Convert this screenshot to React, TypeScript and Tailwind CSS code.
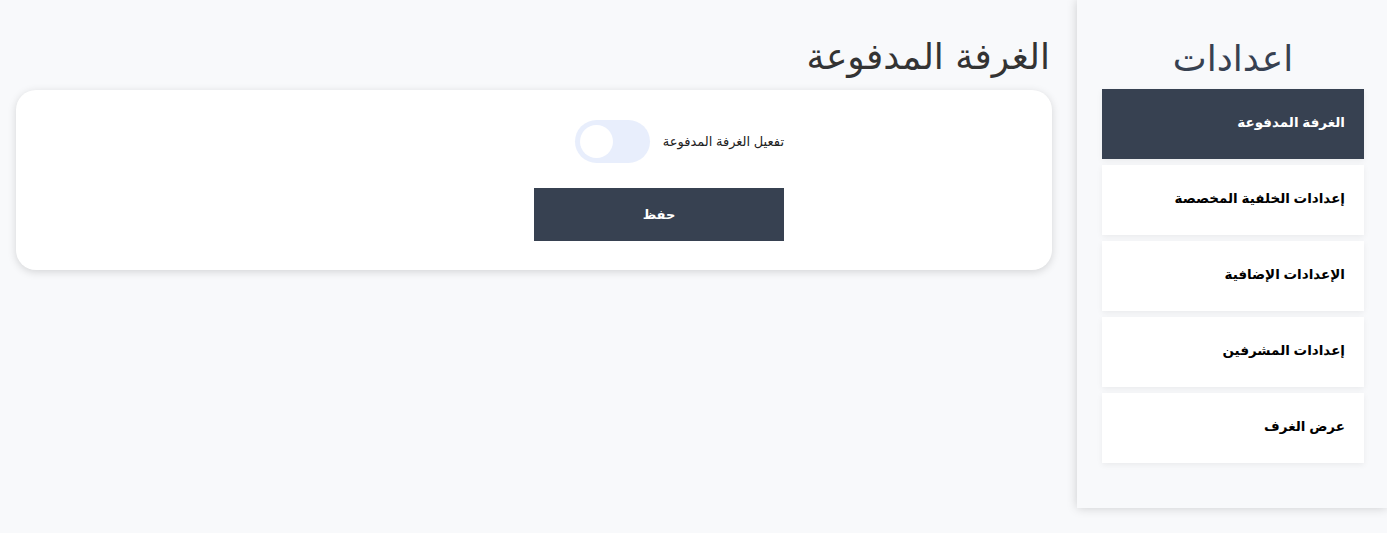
import React, { useState } from "react";

const items = [
  "الغرفة المدفوعة",
  "إعدادات الخلفية المخصصة",
  "الإعدادات الإضافية",
  "إعدادات المشرفين",
  "عرض الغرف",
];

export default function App() {
  const [on, setOn] = useState(false);
  return (
    <div dir="rtl" className="flex min-h-screen bg-[#f8f9fb]" style={{ fontFamily: "'Liberation Sans', 'DejaVu Sans', sans-serif" }}>
      <aside className="w-[310px] h-[508px] bg-[#f8f9fb] shadow-[0_0_10px_rgba(0,0,0,0.18)] pr-[23px] pl-[25px] pt-[30px] shrink-0">
        <h1 className="text-center text-[36px] leading-[58px] text-[#374151] font-['DejaVu_Sans',sans-serif] mb-[1px]">اعدادات</h1>
        <nav className="flex flex-col gap-[6px]">
          {items.map((t, i) => (
            <div
              key={t}
              className={
                "h-[70px] flex items-center pr-[19px] text-[13.5px] font-bold shadow-[0_2px_6px_rgba(0,0,0,0.06)] " +
                (i === 0 ? "bg-[#374151] text-white" : "bg-white text-black")
              }
            >
              <span className="-mt-[1px]">{t}</span>
            </div>
          ))}
        </nav>
      </aside>
      <main className="flex-1 pr-[25px] pl-[16px] pt-[29px]">
        <h2 className="text-[36px] leading-[56px] text-[#333333] font-['DejaVu_Sans',sans-serif] mb-[5px] pr-[2px]">الغرفة المدفوعة</h2>
        <div className="bg-white rounded-[20px] shadow-[0_2px_8px_rgba(0,0,0,0.15)] pt-[30px] pb-[29px] flex justify-center">
          <div className="w-[500px] flex flex-col items-start">
            <div className="flex items-center gap-[13px] h-[43px]">
              <span className="text-[13px] text-[#222]">تفعيل الغرفة المدفوعة</span>
              <button
                onClick={() => setOn(!on)}
                className={"w-[75px] h-[43px] rounded-full flex items-center px-[5px] " + (on ? "bg-[#374151] justify-start" : "bg-[#e8eefc] justify-end")}
              >
                <span className="w-[33px] h-[33px] rounded-full bg-white block" />
              </button>
            </div>
            <button className="mt-[25px] w-[250px] h-[53px] bg-[#374151] text-white text-[13px] font-bold">حفظ</button>
          </div>
        </div>
      </main>
    </div>
  );
}
